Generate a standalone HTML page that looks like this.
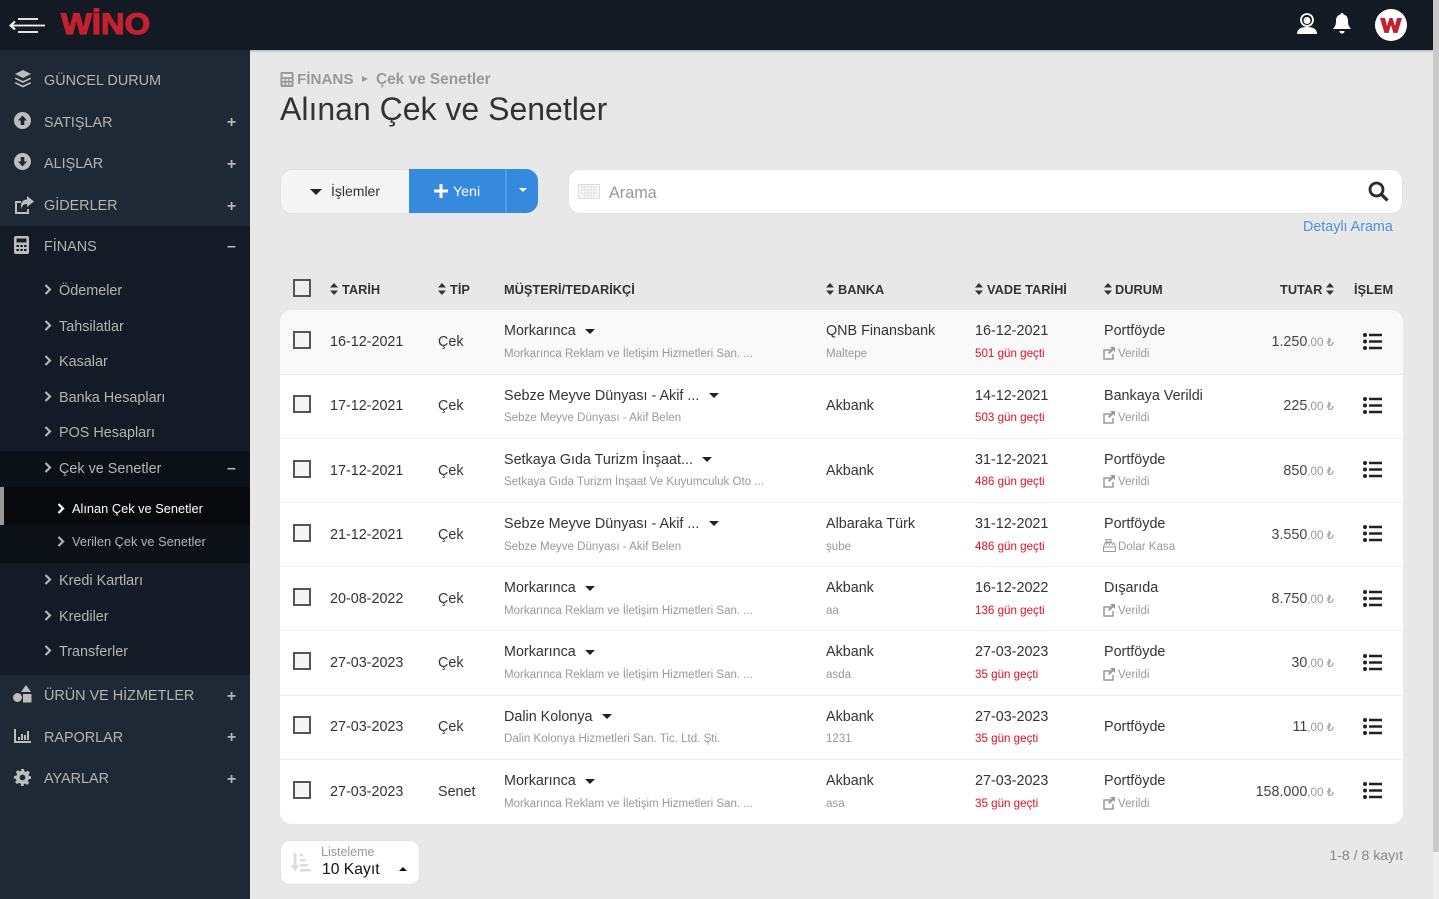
<!DOCTYPE html>
<html lang="tr"><head><meta charset="utf-8"><title>Alınan Çek ve Senetler</title>
<style>
*{box-sizing:border-box}
html,body{margin:0;padding:0;width:1439px;height:899px;overflow:hidden;background:#e8e8e8;font-family:"Liberation Sans",sans-serif;color:#333}
.a,.t{position:absolute}
.t{white-space:nowrap;line-height:18px;margin-top:1px}
.top{left:0;top:0;width:1433px;height:50px;background:#131a24;box-shadow:0 1px 2px rgba(0,0,0,.25)}
.side{left:0;top:50px;width:250px;height:849px;background:#1f2935}
.m{font-size:14.4px;color:#b4b4b4;left:44px}
.s{font-size:14.4px;color:#b4b4b4;left:59px}
.pm{left:226px;font-size:16px;font-weight:bold;color:#b4b4b4;width:11px;text-align:center}
.th{font-size:12.8px;font-weight:bold;color:#333;top:280px;margin-top:1px}
.row{left:280px;width:1123px;background:#fff;border-bottom:1px solid #eee}
.cb{left:293px;width:18px;height:18px;border:2px solid #555;background:#f5f5f5}
.d{font-size:14.35px;color:#333}
.sm{font-size:11.55px;color:#999;margin-top:1px}
.r{font-size:11.6px;color:#e01020;margin-top:1px}
.amt{font-size:14.3px;color:#444;right:105px;text-align:right}
.amt span{font-size:11.6px;color:#999}
svg{position:absolute;display:block}
svg[width="21"][height="18"]{margin:1px 0 0 1px}
svg[stroke]{margin-top:1px}
</style></head><body>
<div class="a top"></div>
<svg style="left:9px;top:17px" width="37" height="17" viewBox="0 0 37 17"><path d="M9 2h20M1 8.500h35M9 15h20" stroke="#fff" stroke-width="1.800"/><path d="M6 4.500 1.500 8.500 6 12.500" stroke="#fff" stroke-width="2" fill="none"/></svg>
<div class="t" style="left:61px;top:8px;margin:0;font-size:30px;line-height:34px;font-weight:bold;color:#c4202f;-webkit-text-stroke:1.2px #c4202f;transform:scaleX(1.09);transform-origin:left">WİNO</div>
<svg style="left:1296px;top:12px" width="22" height="23" viewBox="0 0 22 23"><circle cx="11" cy="8" r="6" fill="none" stroke="#fff" stroke-width="1.800"/><circle cx="11" cy="8.500" r="3.500" fill="#fff"/><path d="M1 22c0-5 4-7 10-7s10 2 10 7z" fill="#fff"/></svg>
<svg style="left:1332px;top:12px" width="20" height="23" viewBox="0 0 20 23"><path d="M10 1c1 0 1.500.7 1.500 1.500C15 3.300 16 6 16 9c0 4 1 5.500 3 8H1c2-2.500 3-4 3-8 0-3 1-5.700 4.500-6.500C8.500 1.700 9 1 10 1z" fill="#fff"/><path d="M7.500 19h5c0 1.500-1 2.500-2.500 2.500S7.500 20.500 7.500 19z" fill="#fff"/></svg>
<div class="a" style="left:1375px;top:9px;width:32px;height:32px;border-radius:50%;background:#fff"></div>
<svg style="left:1380px;top:18px" width="22" height="15" viewBox="0 0 22 15"><path d="M0 0h5l2 8 2.500-8h3L15 8l2-8h5l-4.500 15h-4L11 7l-2.500 8h-4z" fill="#c4202f"/></svg>
<div class="a" style="left:1433px;top:0;width:6px;height:852px;background:#c9c9c9"></div>
<div class="a" style="left:1433px;top:852px;width:6px;height:47px;background:#efefef"></div>

<div class="a side"></div>
<div class="a" style="left:0;top:226px;width:250px;height:449px;background:#141b26"></div>
<div class="a" style="left:0;top:451px;width:250px;height:112px;background:#0c1017"></div>
<div class="a" style="left:0;top:487px;width:250px;height:38px;background:#08090d"></div>
<div class="a" style="left:0;top:487px;width:4px;height:38px;background:#999"></div>

<svg style="left:14px;top:70px" width="18" height="18" viewBox="0 0 18 18"><path d="M9 0l8 4-8 4-8-4z M1.500 7.500 9 11l7.500-3.500L17 9l-8 4-8-4z M1.500 12 9 15.500 16.500 12l.5 1.500-8 4-8-4z" fill="#bdbdbd"/></svg>
<svg style="left:14px;top:112px" width="17" height="17" viewBox="0 0 17 17"><circle cx="8.500" cy="8.500" r="8.500" fill="#bdbdbd"/><path d="M8.500 3.500 13 8.500H10.300V13H6.700V8.500H4z" fill="#1f2935"/></svg>
<svg style="left:14px;top:153px" width="17" height="17" viewBox="0 0 17 17"><circle cx="8.500" cy="8.500" r="8.500" fill="#bdbdbd"/><path d="M8.500 13.500 13 8.500H10.300V4H6.700V8.500H4z" fill="#1f2935"/></svg>
<svg style="left:13px;top:195px" width="21" height="18" viewBox="0 0 21 18"><path d="M1 5h6v2H3v9h10v-3h2v5H1z" fill="#bdbdbd"/><path d="M13 0l7 5.500-7 5.500V8C9 8 8 10 7.500 13 6 8 8 3.500 13 3.500z" fill="#bdbdbd"/></svg>
<svg style="left:14px;top:236px" width="15" height="18" viewBox="0 0 15 18"><rect width="15" height="18" rx="2" fill="#bdbdbd"/><rect x="2.500" y="2.500" width="10" height="4" fill="#141b26"/><path d="M2.500 9h2.500v2H2.500zM6.300 9h2.500v2H6.300zM10 9h2.500v2H10zM2.500 13h2.500v2H2.500zM6.300 13h2.500v2H6.300zM10 13h2.500v2H10z" fill="#141b26"/></svg>
<svg style="left:13px;top:685px" width="19" height="18" viewBox="0 0 19 18"><path d="M13 0l5 7H8z" fill="#bdbdbd"/><circle cx="4.500" cy="12.500" r="4.500" fill="#bdbdbd"/><rect x="10" y="9" width="8.500" height="8.500" fill="#bdbdbd"/></svg>
<svg style="left:14px;top:729px" width="17" height="14" viewBox="0 0 17 14"><path d="M0 0h2v12h15v2H0z" fill="#bdbdbd"/><path d="M4 8h2v3H4zM7 5h2v6H7zM10 6h2v5h-2zM13 2h2v9h-2z" fill="#bdbdbd"/></svg>
<svg style="left:14px;top:769px" width="17" height="17" viewBox="0 0 24 24"><path d="M10 0h4l.6 3.200 2.300 1 2.700-1.900 2.800 2.800-1.900 2.700 1 2.300L24 10v4l-3.500.6-1 2.300 1.900 2.700-2.800 2.800-2.700-1.900-2.300 1L14 24h-4l-.6-3.500-2.300-1-2.700 1.900-2.800-2.800 1.900-2.700-1-2.300L0 14v-4l3.500-.6 1-2.300L2.600 4.400l2.800-2.800 2.700 1.900 2.300-1zM12 8a4 4 0 100 8 4 4 0 000-8z" fill="#bdbdbd" fill-rule="evenodd"/></svg>

<div class="t m" style="top:71px">GÜNCEL DURUM</div>
<div class="t m" style="top:113px">SATIŞLAR</div>
<div class="t m" style="top:154px">ALIŞLAR</div>
<div class="t m" style="top:196px">GİDERLER</div>
<div class="t m" style="top:237px">FİNANS</div>
<div class="t m" style="top:686px">ÜRÜN VE HİZMETLER</div>
<div class="t m" style="top:728px">RAPORLAR</div>
<div class="t m" style="top:769px">AYARLAR</div>
<div class="t pm" style="top:113px">+</div>
<div class="t pm" style="top:155px">+</div>
<div class="t pm" style="top:197px">+</div>
<div class="t pm" style="top:237px">–</div>
<div class="t pm" style="top:459px">–</div>
<div class="t pm" style="top:687px">+</div>
<div class="t pm" style="top:728px">+</div>
<div class="t pm" style="top:770px">+</div>

<svg width="0" height="0"><defs><path id="c" d="M1.500 1 6 5.500 1.500 10" fill="none" stroke-width="2.200"/></defs></svg>
<svg style="left:44px;top:283px" width="8" height="12" stroke="#b4b4b4"><use href="#c"/></svg><div class="t s" style="top:281px">Ödemeler</div>
<svg style="left:44px;top:319px" width="8" height="12" stroke="#b4b4b4"><use href="#c"/></svg><div class="t s" style="top:317px">Tahsilatlar</div>
<svg style="left:44px;top:354px" width="8" height="12" stroke="#b4b4b4"><use href="#c"/></svg><div class="t s" style="top:352px">Kasalar</div>
<svg style="left:44px;top:390px" width="8" height="12" stroke="#b4b4b4"><use href="#c"/></svg><div class="t s" style="top:388px">Banka Hesapları</div>
<svg style="left:44px;top:425px" width="8" height="12" stroke="#b4b4b4"><use href="#c"/></svg><div class="t s" style="top:423px">POS Hesapları</div>
<svg style="left:44px;top:461px" width="8" height="12" stroke="#b4b4b4"><use href="#c"/></svg><div class="t s" style="top:459px">Çek ve Senetler</div>
<svg style="left:57px;top:502px" width="8" height="12" stroke="#fff"><use href="#c"/></svg><div class="t" style="left:72px;top:499px;font-size:12.8px;color:#fff">Alınan Çek ve Senetler</div>
<svg style="left:57px;top:535px" width="8" height="12" stroke="#b4b4b4"><use href="#c"/></svg><div class="t" style="left:72px;top:532px;font-size:12.8px;color:#b4b4b4">Verilen Çek ve Senetler</div>
<svg style="left:44px;top:573px" width="8" height="12" stroke="#b4b4b4"><use href="#c"/></svg><div class="t s" style="top:571px">Kredi Kartları</div>
<svg style="left:44px;top:609px" width="8" height="12" stroke="#b4b4b4"><use href="#c"/></svg><div class="t s" style="top:607px">Krediler</div>
<svg style="left:44px;top:644px" width="8" height="12" stroke="#b4b4b4"><use href="#c"/></svg><div class="t s" style="top:642px">Transferler</div>

<svg style="left:280px;top:72px" width="14" height="15" viewBox="0 0 14 16"><rect width="14" height="16" rx="1.500" fill="#999"/><rect x="2" y="2" width="10" height="3.500" fill="#e8e8e8"/><path d="M2 7.500h2.500v2H2zM5.800 7.500h2.500v2H5.800zM9.500 7.500H12v2H9.500zM2 11.500h2.500v2H2zM5.800 11.500h2.500v2H5.800zM9.500 11.500H12v2H9.500z" fill="#e8e8e8"/></svg>
<div class="t" style="left:297px;top:70px;font-size:15.2px;font-weight:bold;color:#999">FİNANS</div>
<div class="a" style="left:362px;top:76px;border-left:6px solid #999;border-top:3.500px solid transparent;border-bottom:3.500px solid transparent"></div>
<div class="t" style="left:376px;top:70px;font-size:15.4px;font-weight:bold;color:#999">Çek ve Senetler</div>
<div class="t" style="left:280px;top:89px;font-size:32px;line-height:38px;color:#333">Alınan Çek ve Senetler</div>

<div class="a" style="left:280px;top:169px;width:129px;height:45px;background:#f5f5f5;border:1px solid #e2e2e2;border-right:0;border-radius:12px 0 0 12px"></div>
<div class="a" style="left:310px;top:189px;border-top:6px solid #222;border-left:6px solid transparent;border-right:6px solid transparent"></div>
<div class="t" style="left:331px;top:181px;font-size:14px;color:#333">İşlemler</div>
<div class="a" style="left:409px;top:169px;width:129px;height:44px;background:#368ade;border-radius:0 12px 12px 0"></div>
<div class="a" style="left:505px;top:169px;width:2px;height:44px;background:#4a9df0"></div>
<svg style="left:434px;top:184px" width="14" height="14" viewBox="0 0 14 14"><path d="M5.500 0h3v5.500H14v3H8.500V14h-3V8.500H0v-3h5.500z" fill="#fff"/></svg>
<div class="t" style="left:453px;top:182px;font-size:14.2px;color:#fff">Yeni</div>
<div class="a" style="left:519px;top:188px;border-top:4.500px solid #fff;border-left:4.500px solid transparent;border-right:4.500px solid transparent"></div>

<div class="a" style="left:568px;top:169px;width:835px;height:45px;background:#fff;border:1px solid #e2e2e2;border-radius:12px"></div>
<svg style="left:578px;top:184px" width="22" height="15" viewBox="0 0 22 15"><rect x=".5" y=".5" width="21" height="14" fill="#f5f5f5" stroke="#ddd"/><path d="M3 3h16M3 6h16M3 9h16M6 12h10" stroke="#ddd" stroke-width="1.500" stroke-dasharray="2 1"/></svg>
<div class="t" style="left:609px;top:183px;font-size:16.2px;color:#999">Arama</div>
<svg style="left:1368px;top:181px" width="21" height="21" viewBox="0 0 21 21"><circle cx="8.500" cy="8.500" r="6.500" fill="none" stroke="#2a2a2a" stroke-width="2.800"/><path d="M13.500 13.500 19.500 19.500" stroke="#2a2a2a" stroke-width="3.200"/></svg>
<div class="t" style="left:1303px;top:217px;font-size:14.3px;color:#4a90e2">Detaylı Arama</div>

<div class="a cb" style="top:279px;background:#eee"></div>
<svg width="0" height="0"><defs><path id="o" d="M4 0 8 4.500H0zM4 12 0 7.500h8z" fill="#333"/></defs></svg>
<svg style="left:330px;top:283px" width="8" height="12"><use href="#o"/></svg><div class="t th" style="left:342px">TARİH</div>
<svg style="left:438px;top:283px" width="8" height="12"><use href="#o"/></svg><div class="t th" style="left:450px">TİP</div>
<div class="t th" style="left:504px">MÜŞTERİ/TEDARİKÇİ</div>
<svg style="left:826px;top:283px" width="8" height="12"><use href="#o"/></svg><div class="t th" style="left:838px">BANKA</div>
<svg style="left:975px;top:283px" width="8" height="12"><use href="#o"/></svg><div class="t th" style="left:987px">VADE TARİHİ</div>
<svg style="left:1104px;top:283px" width="8" height="12"><use href="#o"/></svg><div class="t th" style="left:1115px">DURUM</div>
<div class="t th" style="left:1280px">TUTAR</div><svg style="left:1326px;top:283px" width="8" height="12"><use href="#o"/></svg>
<div class="t th" style="left:1354px">İŞLEM</div>

<div class="a row" style="top:310px;height:65px;background:#f9f9f9;border-radius:12px 12px 0 0"></div>
<div class="a row" style="top:375px;height:64px"></div>
<div class="a row" style="top:439px;height:64px"></div>
<div class="a row" style="top:503px;height:64px"></div>
<div class="a row" style="top:567px;height:64px"></div>
<div class="a row" style="top:631px;height:65px"></div>
<div class="a row" style="top:696px;height:64px"></div>
<div class="a row" style="top:760px;height:64px;border-radius:0 0 12px 12px;border-bottom:0"></div>

<svg width="0" height="0"><defs>
<g id="l"><circle cx="2" cy="2" r="2" fill="#222"/><circle cx="2" cy="8.500" r="2" fill="#222"/><circle cx="2" cy="15" r="2" fill="#222"/><path d="M6 .8h13v2.400H6zM6 7.300h13v2.400H6zM6 13.800h13v2.400H6z" fill="#222"/></g>
<g id="e"><path d="M8 3H1v9h9V7" fill="none" stroke="#999" stroke-width="1.500"/><path d="M7 0h5v5l-1.800-1.700L6.500 7 5 5.500l3.700-3.700z" fill="#999"/></g>
</defs></svg>

<!-- Row 1 -->
<div class="a cb" style="top:331px"></div><div class="t d" style="left:330px;top:332px">16-12-2021</div><div class="t d" style="left:438px;top:332px">Çek</div>
<div class="t d" style="left:504px;top:321px">Morkarınca</div><div class="a" style="left:585px;top:329px;border-top:5px solid #222;border-left:5px solid transparent;border-right:5px solid transparent"></div>
<div class="t sm" style="left:504px;top:344px">Morkarınca Reklam ve İletişim Hizmetleri San. ...</div>
<div class="t d" style="left:826px;top:321px">QNB Finansbank</div><div class="t sm" style="left:826px;top:344px">Maltepe</div>
<div class="t d" style="left:975px;top:321px">16-12-2021</div><div class="t r" style="left:975px;top:344px">501 gün geçti</div>
<div class="t d" style="left:1104px;top:321px">Portföyde</div><svg style="left:1103px;top:347px" width="13" height="13"><use href="#e"/></svg><div class="t sm" style="left:1118px;top:344px">Verildi</div>
<div class="t amt" style="top:332px">1.250<span>,00 ₺</span></div><svg style="left:1362px;top:332px" width="21" height="18"><use href="#l"/></svg>

<!-- Row 2 -->
<div class="a cb" style="top:395px"></div><div class="t d" style="left:330px;top:396px">17-12-2021</div><div class="t d" style="left:438px;top:396px">Çek</div>
<div class="t d" style="left:504px;top:386px">Sebze Meyve Dünyası - Akif ...</div><div class="a" style="left:709px;top:393px;border-top:5px solid #222;border-left:5px solid transparent;border-right:5px solid transparent"></div>
<div class="t sm" style="left:504px;top:408px">Sebze Meyve Dünyası - Akif Belen</div>
<div class="t d" style="left:826px;top:396px">Akbank</div>
<div class="t d" style="left:975px;top:386px">14-12-2021</div><div class="t r" style="left:975px;top:408px">503 gün geçti</div>
<div class="t d" style="left:1104px;top:386px">Bankaya Verildi</div><svg style="left:1103px;top:411px" width="13" height="13"><use href="#e"/></svg><div class="t sm" style="left:1118px;top:408px">Verildi</div>
<div class="t amt" style="top:396px">225<span>,00 ₺</span></div><svg style="left:1362px;top:396px" width="21" height="18"><use href="#l"/></svg>

<!-- Row 3 -->
<div class="a cb" style="top:460px"></div><div class="t d" style="left:330px;top:461px">17-12-2021</div><div class="t d" style="left:438px;top:461px">Çek</div>
<div class="t d" style="left:504px;top:450px">Setkaya Gıda Turizm İnşaat...</div><div class="a" style="left:702px;top:457px;border-top:5px solid #222;border-left:5px solid transparent;border-right:5px solid transparent"></div>
<div class="t sm" style="left:504px;top:472px">Setkaya Gıda Turizm İnşaat Ve Kuyumculuk Oto ...</div>
<div class="t d" style="left:826px;top:461px">Akbank</div>
<div class="t d" style="left:975px;top:450px">31-12-2021</div><div class="t r" style="left:975px;top:472px">486 gün geçti</div>
<div class="t d" style="left:1104px;top:450px">Portföyde</div><svg style="left:1103px;top:475px" width="13" height="13"><use href="#e"/></svg><div class="t sm" style="left:1118px;top:472px">Verildi</div>
<div class="t amt" style="top:461px">850<span>,00 ₺</span></div><svg style="left:1362px;top:460px" width="21" height="18"><use href="#l"/></svg>

<!-- Row 4 -->
<div class="a cb" style="top:524px"></div><div class="t d" style="left:330px;top:525px">21-12-2021</div><div class="t d" style="left:438px;top:525px">Çek</div>
<div class="t d" style="left:504px;top:514px">Sebze Meyve Dünyası - Akif ...</div><div class="a" style="left:709px;top:521px;border-top:5px solid #222;border-left:5px solid transparent;border-right:5px solid transparent"></div>
<div class="t sm" style="left:504px;top:537px">Sebze Meyve Dünyası - Akif Belen</div>
<div class="t d" style="left:826px;top:514px">Albaraka Türk</div><div class="t sm" style="left:826px;top:537px">şube</div>
<div class="t d" style="left:975px;top:514px">31-12-2021</div><div class="t r" style="left:975px;top:537px">486 gün geçti</div>
<div class="t d" style="left:1104px;top:514px">Portföyde</div>
<svg style="left:1103px;top:539px" width="13" height="13" viewBox="0 0 13 13"><path d="M3 .5h5v2.500H3zM2 4h9l1.500 4v4.500H.5V8zM.5 8h12M3 5.500h1M6 5.500h1M9 5.500h1" fill="none" stroke="#999"/></svg>
<div class="t sm" style="left:1118px;top:537px">Dolar Kasa</div>
<div class="t amt" style="top:525px">3.550<span>,00 ₺</span></div><svg style="left:1362px;top:524px" width="21" height="18"><use href="#l"/></svg>

<!-- Row 5 -->
<div class="a cb" style="top:588px"></div><div class="t d" style="left:330px;top:589px">20-08-2022</div><div class="t d" style="left:438px;top:589px">Çek</div>
<div class="t d" style="left:504px;top:578px">Morkarınca</div><div class="a" style="left:585px;top:586px;border-top:5px solid #222;border-left:5px solid transparent;border-right:5px solid transparent"></div>
<div class="t sm" style="left:504px;top:601px">Morkarınca Reklam ve İletişim Hizmetleri San. ...</div>
<div class="t d" style="left:826px;top:578px">Akbank</div><div class="t sm" style="left:826px;top:601px">aa</div>
<div class="t d" style="left:975px;top:578px">16-12-2022</div><div class="t r" style="left:975px;top:601px">136 gün geçti</div>
<div class="t d" style="left:1104px;top:578px">Dışarıda</div><svg style="left:1103px;top:604px" width="13" height="13"><use href="#e"/></svg><div class="t sm" style="left:1118px;top:601px">Verildi</div>
<div class="t amt" style="top:589px">8.750<span>,00 ₺</span></div><svg style="left:1362px;top:589px" width="21" height="18"><use href="#l"/></svg>

<!-- Row 6 -->
<div class="a cb" style="top:652px"></div><div class="t d" style="left:330px;top:653px">27-03-2023</div><div class="t d" style="left:438px;top:653px">Çek</div>
<div class="t d" style="left:504px;top:642px">Morkarınca</div><div class="a" style="left:585px;top:650px;border-top:5px solid #222;border-left:5px solid transparent;border-right:5px solid transparent"></div>
<div class="t sm" style="left:504px;top:665px">Morkarınca Reklam ve İletişim Hizmetleri San. ...</div>
<div class="t d" style="left:826px;top:642px">Akbank</div><div class="t sm" style="left:826px;top:665px">asda</div>
<div class="t d" style="left:975px;top:642px">27-03-2023</div><div class="t r" style="left:975px;top:665px">35 gün geçti</div>
<div class="t d" style="left:1104px;top:642px">Portföyde</div><svg style="left:1103px;top:668px" width="13" height="13"><use href="#e"/></svg><div class="t sm" style="left:1118px;top:665px">Verildi</div>
<div class="t amt" style="top:653px">30<span>,00 ₺</span></div><svg style="left:1362px;top:653px" width="21" height="18"><use href="#l"/></svg>

<!-- Row 7 -->
<div class="a cb" style="top:716px"></div><div class="t d" style="left:330px;top:717px">27-03-2023</div><div class="t d" style="left:438px;top:717px">Çek</div>
<div class="t d" style="left:504px;top:707px">Dalin Kolonya</div><div class="a" style="left:602px;top:714px;border-top:5px solid #222;border-left:5px solid transparent;border-right:5px solid transparent"></div>
<div class="t sm" style="left:504px;top:729px">Dalin Kolonya Hizmetleri San. Tic. Ltd. Şti.</div>
<div class="t d" style="left:826px;top:707px">Akbank</div><div class="t sm" style="left:826px;top:729px">1231</div>
<div class="t d" style="left:975px;top:707px">27-03-2023</div><div class="t r" style="left:975px;top:729px">35 gün geçti</div>
<div class="t d" style="left:1104px;top:717px">Portföyde</div>
<div class="t amt" style="top:717px">11<span>,00 ₺</span></div><svg style="left:1362px;top:717px" width="21" height="18"><use href="#l"/></svg>

<!-- Row 8 -->
<div class="a cb" style="top:781px"></div><div class="t d" style="left:330px;top:782px">27-03-2023</div><div class="t d" style="left:438px;top:782px">Senet</div>
<div class="t d" style="left:504px;top:771px">Morkarınca</div><div class="a" style="left:585px;top:779px;border-top:5px solid #222;border-left:5px solid transparent;border-right:5px solid transparent"></div>
<div class="t sm" style="left:504px;top:794px">Morkarınca Reklam ve İletişim Hizmetleri San. ...</div>
<div class="t d" style="left:826px;top:771px">Akbank</div><div class="t sm" style="left:826px;top:794px">asa</div>
<div class="t d" style="left:975px;top:771px">27-03-2023</div><div class="t r" style="left:975px;top:794px">35 gün geçti</div>
<div class="t d" style="left:1104px;top:771px">Portföyde</div><svg style="left:1103px;top:797px" width="13" height="13"><use href="#e"/></svg><div class="t sm" style="left:1118px;top:794px">Verildi</div>
<div class="t amt" style="top:782px">158.000<span>,00 ₺</span></div><svg style="left:1362px;top:781px" width="21" height="18"><use href="#l"/></svg>

<div class="a" style="left:280px;top:840px;width:140px;height:45px;background:#fff;border:1px solid #e2e2e2;border-radius:10px"></div>
<svg style="left:290px;top:853px" width="21" height="19" viewBox="0 0 21 19"><path d="M3.500 0h3v12h3L5 18.500.500 12h3z" fill="#ddd"/><path d="M10 1h3v2.500h-3zM10 6h6v2.500h-6zM10 11h8v2.500h-8zM10 16h11v2.500H10z" fill="#ddd"/></svg>
<div class="t" style="left:321px;top:843px;margin:0;font-size:12.5px;color:#999">Listeleme</div>
<div class="t" style="left:322px;top:860px;font-size:15.7px;color:#111">10 Kayıt</div>
<div class="a" style="left:399px;top:867px;border-bottom:4.500px solid #111;border-left:4.500px solid transparent;border-right:4.500px solid transparent"></div>
<div class="t" style="right:36px;top:846px;margin:0;font-size:14.1px;color:#888">1-8 / 8 kayıt</div>
</body></html>
